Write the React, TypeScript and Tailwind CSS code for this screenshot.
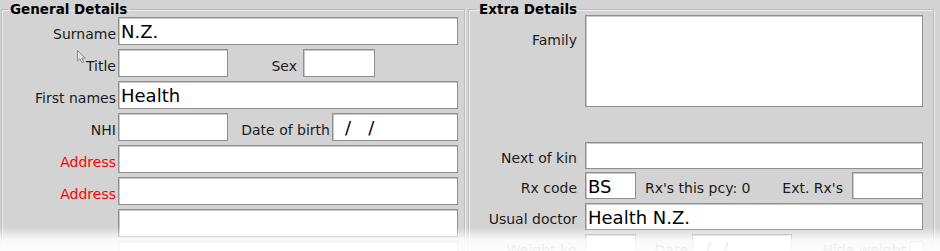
import type React from "react"

const font = { fontFamily: '"DejaVu Sans", Verdana, sans-serif' }

interface BoxProps {
  className?: string
  text?: string
}

const Box: React.FC<BoxProps> = ({ className = "", text }) => (
  <div
    className={`bg-white border border-[#8f8f8f] shadow-[inset_1px_1px_0_#c9c9c9] flex items-center pl-[2px] pt-[1px] text-[18px] leading-[21px] text-black whitespace-pre overflow-hidden ${className}`}
  >
    {text}
  </div>
)

const Label: React.FC<{ text: string; className?: string }> = ({ text, className = "" }) => (
  <span className={`self-end pb-[3px] leading-[16px] text-right whitespace-nowrap ${className}`}>{text}</span>
)

const App: React.FC = () => {
  return (
    <div
      className="relative w-[940px] h-[251px] overflow-hidden bg-[#d3d3d3] text-[14px] text-[#1b1b1b] flex pl-[1px]"
      style={font}
    >
      {/* General details */}
      <fieldset className="w-[464px] h-[270px] border border-[#bcbcbc] shadow-[inset_1px_1px_0_#ececec,1px_1px_0_#ececec]">
        <legend className="ml-[6px] px-[2px] font-bold text-[13.5px] leading-[19px] text-black">General Details</legend>
        <div className="flex flex-col gap-[4px] -mt-[2px]">
          <div className="flex h-[28px]">
            <Label text="Surname" className="w-[114px]" />
            <Box className="ml-[2px] w-[340px]" text="N.Z." />
          </div>
          <div className="flex h-[28px]">
            <Label text="Title" className="w-[114px] pb-[1px]" />
            <Box className="ml-[2px] w-[110px]" />
            <Label text="Sex" className="w-[69px] pb-[1px]" />
            <Box className="ml-[6px] w-[72px]" />
          </div>
          <div className="flex h-[28px]">
            <Label text="First names" className="w-[114px]" />
            <Box className="ml-[2px] w-[340px]" text="Health" />
          </div>
          <div className="flex h-[28px]">
            <Label text="NHI" className="w-[114px]" />
            <Box className="ml-[2px] w-[110px]" />
            <Label text="Date of birth" className="w-[102px]" />
            <Box className="ml-[2px] w-[126px] pl-[12px]" text={"/   /"} />
          </div>
          <div className="flex h-[28px]">
            <Label text="Address" className="w-[114px] text-[#f00]" />
            <Box className="ml-[2px] w-[340px]" />
          </div>
          <div className="flex h-[28px]">
            <Label text="Address" className="w-[114px] text-[#f00]" />
            <Box className="ml-[2px] w-[340px]" />
          </div>
          <div className="flex h-[28px]">
            <Label text="" className="w-[114px]" />
            <Box className="ml-[2px] w-[340px]" />
          </div>
          <div className="flex h-[28px]">
            <Label text="" className="w-[114px]" />
            <Box className="ml-[2px] w-[340px]" />
          </div>
        </div>
      </fieldset>

      {/* Extra details */}
      <fieldset className="ml-[3px] w-[466px] h-[270px] border border-[#bcbcbc] shadow-[inset_1px_1px_0_#ececec,1px_1px_0_#ececec]">
        <legend className="ml-[8px] px-[2px] font-bold text-[13.5px] leading-[19px] text-black">Extra Details</legend>
        <div className="flex flex-col -mt-[4px]">
          <div className="flex h-[92px]">
            <span className="w-[108px] text-right leading-[16px] pt-[17px]">Family</span>
            <Box className="ml-[8px] w-[338px] h-full" />
          </div>
          <div className="flex h-[27px] mt-[35px]">
            <Label text="Next of kin" className="w-[108px]" />
            <Box className="ml-[8px] w-[338px]" />
          </div>
          <div className="flex h-[27px] mt-[3px]">
            <Label text="Rx code" className="w-[108px]" />
            <div className="ml-[8px] w-[338px] flex">
              <Box className="w-[51px]" text="BS" />
              <Label text="Rx's this pcy: 0" className="ml-[9px] text-left" />
              <Label text="Ext. Rx's" className="flex-1" />
              <Box className="ml-[9px] w-[71px]" />
            </div>
          </div>
          <div className="flex h-[27px] mt-[4px]">
            <Label text="Usual doctor" className="w-[108px]" />
            <Box className="ml-[8px] w-[338px]" text="Health N.Z." />
          </div>
          <div className="flex h-[27px] mt-[4px]">
            <Label text="Weight kg" className="w-[108px]" />
            <div className="ml-[8px] w-[338px] flex">
              <Box className="w-[51px]" />
              <Label text="Date" className="w-[52px]" />
              <Box className="ml-[4px] w-[100px] pl-[12px]" text={"/  /"} />
              <Label text="Hide weight" className="flex-1" />
              <div className="ml-[4px] self-center w-[13px] h-[13px] bg-white border border-[#8f8f8f]" />
            </div>
          </div>
        </div>
      </fieldset>

      {/* mouse pointer */}
      <svg className="absolute left-[77px] top-[50px] pointer-events-none" width="11" height="14" viewBox="0 0 11 14">
        <path
          d="M0.5 0.5 L0.5 11 L3 8.7 L5 12.8 L6.8 12 L4.9 8.1 L8.2 8.1 Z"
          fill="#e4e4e4"
          stroke="#8a8a8a"
          strokeWidth="1"
          strokeLinejoin="round"
        />
      </svg>

      {/* bottom fade */}
      <div className="absolute inset-x-0 bottom-0 h-[24px] pointer-events-none bg-[linear-gradient(to_bottom,rgba(255,255,255,0)_0%,rgba(255,255,255,0.88)_55%,rgba(255,255,255,0.94)_100%)]" />
    </div>
  )
}

export default App
